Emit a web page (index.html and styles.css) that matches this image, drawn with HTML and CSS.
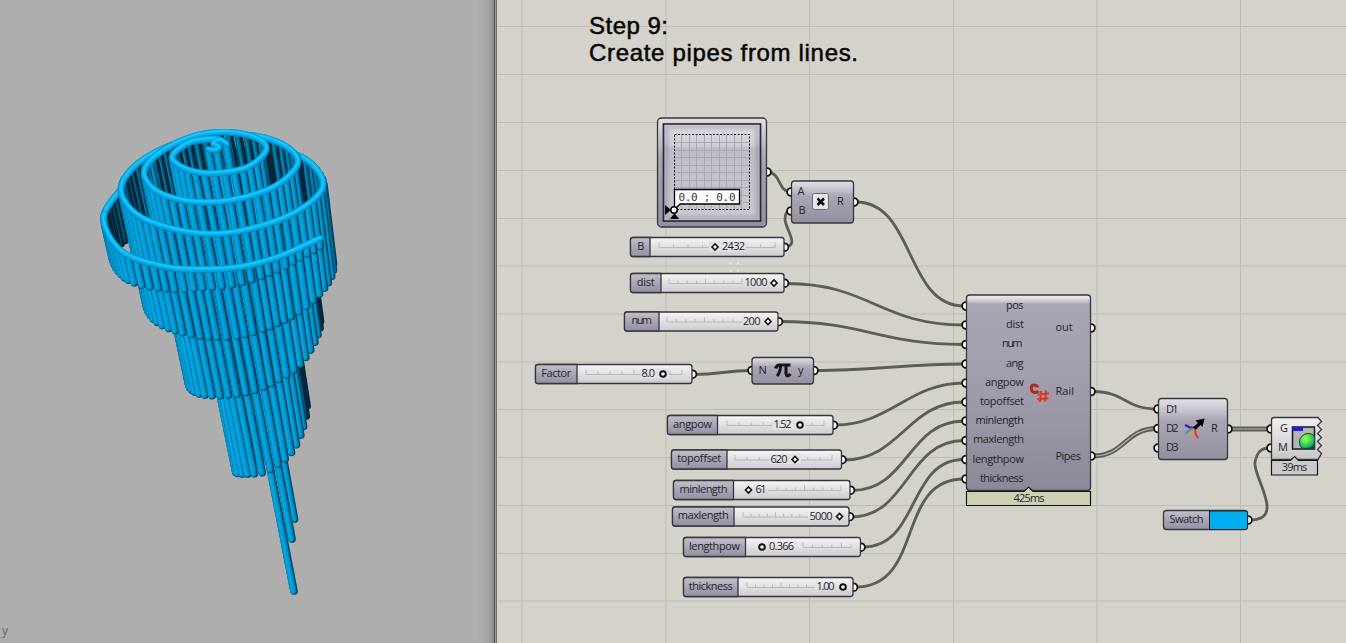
FILE: index.html
```html
<!DOCTYPE html>
<html lang="en">
<head>
<meta charset="utf-8">
<title>Step 9: Create pipes from lines</title>
<link rel="stylesheet" href="styles.css">
</head>
<body>
<main class="workspace">
  <section class="viewport">
    <svg class="model" id="model" viewBox="0 0 494 643"></svg>
    <span class="axis">y</span>
  </section>
  <div class="splitter"></div>
  <section class="canvas">
    <svg class="graph" viewBox="497 0 849 643">
      <defs>
        <linearGradient id="shell" x1="0" y1="0" x2="0" y2="1">
          <stop offset="0" stop-color="#e2e1e6"/><stop offset=".25" stop-color="#bdbac6"/><stop offset=".35" stop-color="#aaa6b6"/><stop offset="1" stop-color="#938f9f"/>
        </linearGradient>
        <linearGradient id="tall" x1="0" y1="0" x2="0" y2="1">
          <stop offset="0" stop-color="#f2f2f4"/><stop offset=".035" stop-color="#c6c4cd"/><stop offset=".045" stop-color="#aaa7b4"/><stop offset=".5" stop-color="#9f9bab"/><stop offset="1" stop-color="#8c8897"/>
        </linearGradient>
        <linearGradient id="tag" x1="0" y1="0" x2="0" y2="1">
          <stop offset="0" stop-color="#c2c0cb"/><stop offset=".45" stop-color="#aaa7b7"/><stop offset="1" stop-color="#9490a2"/>
        </linearGradient>
        <linearGradient id="bar" x1="0" y1="0" x2="0" y2="1">
          <stop offset="0" stop-color="#f5f5f6"/><stop offset=".5" stop-color="#e0dfe2"/><stop offset="1" stop-color="#cccbd0"/>
        </linearGradient>
        <linearGradient id="pad" x1="0" y1="0" x2="0" y2="1">
          <stop offset="0" stop-color="#dfdee2"/><stop offset=".23" stop-color="#cfcdd5"/><stop offset=".24" stop-color="#c0bdc9"/><stop offset="1" stop-color="#cac8d0"/>
        </linearGradient>
        <linearGradient id="light" x1="0" y1="0" x2="0" y2="1">
          <stop offset="0" stop-color="#f1f1f1"/><stop offset="1" stop-color="#c6c6c8"/>
        </linearGradient>
        <radialGradient id="ball" cx=".4" cy=".35" r=".7">
          <stop offset="0" stop-color="#a6ff70"/><stop offset=".5" stop-color="#3ee035"/><stop offset=".8" stop-color="#2aa88a"/><stop offset="1" stop-color="#144c40"/>
        </radialGradient>
        <filter id="soft" x="-10%" y="-10%" width="120%" height="120%"><feGaussianBlur stdDeviation="2"/></filter>
      </defs>

      <g class="grid">
        <path d="M497 26.5H1346M497 74.5H1346M497 122.5H1346M497 170.5H1346M497 218.5H1346M497 266H1346M497 314H1346M497 362H1346M497 409.5H1346M497 457.5H1346M497 505.5H1346M497 553.5H1346M497 601H1346"/>
        <path d="M522 0V643M666 0V643M809.5 0V643M953.5 0V643M1097 0V643M1240.5 0V643"/>
      </g>

      <g class="title">
        <text x="589" y="34" textLength="79">Step 9:</text>
        <text x="589" y="61" textLength="269">Create pipes from lines.</text>
      </g>

      <g class="wires">
        <path d="M768 172C781 173 778 191 790 192"/>
        <path d="M784 247C800 246 787 232 785 220C785 213 787 211 790 211"/>
        <path d="M856 202C915 202 905 306 964 306"/>
        <path d="M786 283.500C870 283.500 880 325 964 325"/>
        <path d="M780 321.500C865 321.500 880 344.500 964 344.500"/>
        <path d="M694 374.500C720 374.500 725 370.500 751 370.500"/>
        <path d="M816 370.500C870 370.500 910 364 964 364"/>
        <path d="M835 425C890 425 909 383 964 383"/>
        <path d="M844 460C900 460 908 402 964 402"/>
        <path d="M852 490.500C908 490.500 908 421 964 421"/>
        <path d="M851 517C908 517 907 440.500 964 440.500"/>
        <path d="M863 547C920 547 907 459.500 964 459.500"/>
        <path d="M855 587C925 587 895 479 964 479"/>
        <path d="M1093 391.500C1125 391.500 1125 409 1157 409"/>
        <path class="double" d="M1093 456C1125 456 1125 428.500 1157 428.500"/>
        <path class="core" d="M1093 456C1125 456 1125 428.500 1157 428.500"/>
        <path class="double" d="M1229 429H1270"/><path class="core" d="M1229 429H1270"/>
        <path d="M1250 520C1287 520 1252 476 1255 462C1257 453 1260 448 1270 448"/>
      </g>

      <g class="ports" id="ports"></g>
      <g id="sliders"></g>

      <g class="md-slider">
        <rect class="node" x="657.500" y="118" width="109" height="109" rx="4" fill="url(#shell)"/>
        <rect class="frame" x="663.500" y="124" width="97" height="97" fill="url(#pad)"/>
        <rect class="pad-shade" x="666" y="126.500" width="92" height="92"/>
        <path class="pad-grid" d="M681.500 135V209M689.500 135V209M696.500 135V209M704.500 135V209M711.500 135V209M719.500 135V209M726.500 135V209M734.500 135V209M741.500 135V209M674 142.500H749M674 150.500H749M674 157.500H749M674 165.500H749M674 172.500H749M674 180.500H749M674 187.500H749M674 195.500H749M674 202.500H749"/>
        <rect class="dotted" x="674.500" y="134.500" width="75" height="75"/>
        <path class="readout" d="M674.500 207V189.500H739.500V204H680L676 208"/>
        <text class="mono" x="678.500" y="201" textLength="57">0.0 ; 0.0</text>
        <path d="M665 205L671 210L665 215ZM670 219L674.500 213L679 219Z"/>
        <circle class="knob" cx="674" cy="210" r="3.200"/>
      </g>

      <g>
        <rect class="node" x="791.500" y="181" width="62" height="42" rx="3" fill="url(#shell)"/>
        <text x="797.500" y="195">A</text><text x="798.500" y="214">B</text><text x="837" y="205">R</text>
        <rect class="key" x="812.500" y="193.500" width="16" height="16" rx="2"/>
        <path class="cross" d="M817.500 198.500L824 205M824 198.500L817.500 205"/>
      </g>
      <g>
        <rect class="node" x="752" y="357.500" width="61.500" height="26.500" rx="3" fill="url(#shell)"/>
        <text x="758.500" y="373.500">N</text><text x="798" y="373.500">y</text>
        <path class="pi" d="M775.500 368.500C777 364.500 778.500 365 780 365H790.500M780.500 365.500C780.500 370 780 373 777 376M786 365.500V373C786 376 788 377 790.500 374"/>
      </g>

      <g class="script">
        <rect class="node" x="966.500" y="295" width="124" height="195.500" rx="3" fill="url(#tall)"/>
        <text x="1006" y="309" textLength="17.500">pos</text><text x="1006" y="328" textLength="18">dist</text><text x="1002" y="347" textLength="20.500">num</text><text x="1006" y="366.500" textLength="17.500">ang</text>
        <text x="985" y="385.500" textLength="39">angpow</text><text x="980" y="405" textLength="44">topoffset</text><text x="975.500" y="424" textLength="48.500">minlength</text><text x="973" y="443" textLength="51">maxlength</text>
        <text x="972.500" y="462.500" textLength="51.500">lengthpow</text><text x="980" y="481.500" textLength="43.500">thickness</text>
        <text x="1055.500" y="331">out</text><text x="1055.500" y="395">Rail</text><text x="1055.500" y="459.500" textLength="25.500">Pipes</text>
        <path class="csharp" d="M1038 387.300C1035.500 383.500 1031 384.500 1031.300 388.500C1031.500 393 1036 393.500 1038.300 391"/>
        <path class="hash" d="M1041 391L1040 402M1046 390.500L1045 401.500M1037.500 394.500L1049 393.500M1037 399.200L1048.500 398.200"/>
        <path class="timer" d="M966.500 491.500H1024L1028.500 487L1033 491.500H1090.500V505.500H966.500Z"/>
        <text class="mid" x="1029" y="501.500" textLength="31">425ms</text>
      </g>

      <g>
        <rect class="node" x="1158.500" y="398.500" width="69" height="61" rx="3" fill="url(#shell)"/>
        <text x="1166" y="412.500" textLength="12.500">D1</text><text x="1166" y="431.500" textLength="12.500">D2</text><text x="1166" y="450.500" textLength="12.500">D3</text><text x="1211" y="431.500">R</text>
        <path class="ray blue" d="M1185 425L1190 427.500H1195"/><path class="ray green" d="M1186 434C1188 430 1190 429 1194 428.500"/>
        <path class="ray orange" d="M1190 435L1194.500 429"/><path class="ray red" d="M1195 429C1195 434 1196 436 1198.500 438"/>
        <path d="M1193 427.500L1198 423L1195.500 420.500L1204.500 418.500L1202.500 427L1200.500 425L1196 429.500Z"/>
      </g>

      <g>
        <path class="node" fill="url(#light)" d="M1274 417.500H1318L1321.500 421.500L1317.500 425.500L1321.500 429.500L1317.500 433.500L1321.500 437.500L1317.500 441.500L1321.500 445.500L1317.500 449.500L1321.500 453.500L1318 459.500H1271.500V420Q1271.500 417.500 1274 417.500Z"/>
        <text x="1280" y="431.500">G</text><text x="1278" y="450.500">M</text>
        <rect class="picture" x="1292.500" y="427" width="22" height="22"/>
        <path fill="#2b17e8" d="M1292.500 427H1303V431H1292.500Z"/>
        <path fill="url(#ball)" stroke="#124b30" d="M1314.500 436A8 8 0 1 0 1302 448.500H1314.500Z"/>
        <path class="timer gray" d="M1271.500 460.500H1290.500L1294.500 456.500L1298.500 460.500H1317.500V475H1271.500Z"/>
        <text class="mid" x="1294.500" y="471" textLength="25.500">39ms</text>
      </g>

      <g>
        <rect class="node" x="1163.500" y="510.500" width="84" height="19" rx="3" fill="url(#tag)"/>
        <path class="swatch" d="M1209.500 511H1245Q1247.500 511 1247.500 513.500V527Q1247.500 529.500 1245 529.500H1209.500Z"/>
        <text x="1169.500" y="523" textLength="34">Swatch</text>
      </g>
      <path class="specks" d="M730 263.500h1.500M737 263.500h1.500M730 270.500h1.500M737 270.500h1.500"/>
    </svg>
  </section>
</main>
<script src="main.js"></script>
</body>
</html>
```
FILE: styles.css
```css
body { margin: 0; overflow: hidden; font-family: "Open Sans", "Noto Sans", sans-serif; }
.workspace { display: flex; width: 1346px; height: 643px; }
.viewport { position: relative; width: 494px; background: linear-gradient(90deg, #aeaeae 0, #aeaeae 478px, #a3a0a2 489px, #8d898c 494px); }
.model { display: block; width: 494px; height: 643px; }
.axis { position: absolute; left: 2px; bottom: 4px; color: #646464; font: 12px/16px "Open Sans", sans-serif; }
.splitter { width: 3px; background: linear-gradient(90deg, #505252 0 1px, #9b9b99 1px 2px, #6d6d6b 2px 3px); }
.canvas { width: 849px; background: #d5d2cb; }
.graph { display: block; width: 849px; height: 643px; }
.graph text { font-size: 11px; fill: #252429; }
.grid path { fill: none; stroke: #bfbcb5; stroke-width: 1; }
.graph .title text { font: 24px "Liberation Sans", Arial, sans-serif; fill: #050505; stroke: #050505; stroke-width: .5; }
.wires path { fill: none; stroke: #5e5c57; stroke-width: 2.8; }
.wires .double { stroke-width: 4.800; }
.wires .core { stroke: #b5b2ab; stroke-width: 1.2; }
.ports circle { fill: #fff; stroke: #111; stroke-width: 1.8; }
.node { stroke: #37363c; stroke-width: 1.3; }
.frame { stroke: #18171b; stroke-width: 1.6; }
.pad-shade { fill: none; stroke: #77738a; stroke-opacity: .45; stroke-width: 4; filter: url(#soft); }
.pad-grid { fill: none; stroke: #aaa7b3; stroke-width: 1; }
.dotted { fill: none; stroke: #111; stroke-dasharray: 2 1.5; }
.readout { fill: #fff; stroke: #000; stroke-width: 1.3; }
.graph .mono { font: 11px "DejaVu Sans Mono", monospace; fill: #333; }
.knob { fill: #fff; stroke: #000; stroke-width: 1.5; }
.key { fill: #e7e7e9; stroke: #6c6975; }
.cross { stroke: #080808; stroke-width: 2.5; }
.pi { fill: none; stroke: #151416; stroke-width: 3; }
.graph .mid { text-anchor: middle; }
.csharp { fill: none; stroke: #b82416; stroke-width: 3; }
.hash { fill: none; stroke: #d93a26; stroke-width: 2.1; }
.timer { fill: #ccd1b3; stroke: #151515; stroke-width: 1.2; }
.timer.gray { fill: #cbcacd; }
.ray { fill: none; stroke-width: 2; }
.blue { stroke: #3417c2; }
.green { stroke: #399e90; }
.orange { stroke: #dc9a35; }
.red { stroke: #e63a26; }
.picture { fill: #b5b3b7; stroke: #17161b; stroke-width: 1.5; }
.swatch { fill: #00aff0; stroke: #222; }
.specks { stroke: #f4f3ef; stroke-width: 1.5; }
.track { fill: none; stroke: #b4b2b7; stroke-width: .9; }
.handle { fill: #fff; stroke: #111; stroke-width: 1.6; }
.handle.round { stroke-width: 2; }
.pipe { stroke-linecap: round; fill: none; }
.rail { stroke-linejoin: round; fill: none; }
.rail.tip { stroke-linecap: round; }
```
FILE: main.js
```js
const NS = "http://www.w3.org/2000/svg";
function add(parent, tag, attrs, text) {
  const el = document.createElementNS(NS, tag);
  for (const k in attrs) el.setAttribute(k, attrs[k]);
  if (text) el.textContent = text;
  parent.appendChild(el);
  return el;
}

/* Number sliders: label, left, top, right, divider, label width,
   value, value left, value width, handle x, handle kind, track start, track end */
const sliders = [
  ["B", 630.5, 237.5, 784, 650, 6, "2432", 722, 23, 715, "d", 659, 775],
  ["dist", 630.5, 273.5, 784, 661, 18, "1000", 744.5, 23, 774, "d", 669, 742],
  ["num", 624.5, 312, 778, 659, 20.5, "200", 743, 17.5, 768, "d", 667, 742],
  ["Factor", 535.5, 364.500, 692, 577, 30, "8.0", 641.5, 13.5, 663, "c", 586, 682],
  ["angpow", 667.5, 415.500, 833, 717.5, 39, "1.52", 773.5, 18, 800, "c", 727, 824],
  ["topoffset", 671.5, 450, 841.5, 727, 44, "620", 770.5, 17, 795, "d", 735, 832],
  ["minlength", 673.5, 480.500, 850, 733.5, 48, "61", 755.5, 11, 748.5, "d", 768, 841],
  ["maxlength", 672.5, 507, 849, 734, 51, "5000", 809.5, 23, 839.5, "d", 743, 808],
  ["lengthpow", 683.5, 537.5, 860.5, 745.5, 51, "0.366", 769, 25, 762, "c", 803, 851],
  ["thickness", 683.5, 577.5, 853, 738, 44, "1.00", 816.5, 18, 843, "c", 747, 815]
];
const group = document.getElementById("sliders");
for (const [label, x, y, r, d, lw, value, vx, vw, hx, kind, t0, t1] of sliders) {
  const g = add(group, "g", {});
  add(g, "rect", { class: "node", x, y, width: r - x, height: 19, rx: 2.5, fill: "url(#bar)" });
  add(g, "path", { class: "node", fill: "url(#tag)", d: `M${d} ${y}H${x + 2.5}Q${x} ${y} ${x} ${y + 2.5}V${y + 16.5}Q${x} ${y + 19} ${x + 2.5} ${y + 19}H${d}Z` });
  const count = t1 - t0 < 60 ? 5 : 8, base = y + 10;
  let path = `M${t0} ${base}H${t1}`;
  for (let i = 0; i <= count; i++) {
    const tx = t0 + (t1 - t0) * i / count;
    const clash = Math.abs(tx - hx) < 7 || (tx > vx - 2 && tx < vx + vw + 2);
    if (!clash) path += `M${tx} ${base}v${i % 4 ? -3 : -5}`;
  }
  add(g, "path", { class: "track", d: path });
  if (t0 < vx && t1 > vx) {
    const a = Math.min(vx, hx - 5) - 1, b = Math.max(vx + vw, hx + 5) + 1;
    add(g, "rect", { x: a, y: y + 4, width: b - a, height: 10, fill: "#e2e1e4" });
  }
  add(g, "text", { x: (x + d) / 2 - lw / 2, y: y + 12, textLength: lw }, label);
  add(g, "text", { x: vx, y: y + 12.5, textLength: vw }, value);
  if (kind === "d") add(g, "path", { class: "handle", d: `M${hx - 3} ${y + 9.5}l3 -3l3 3l-3 3Z` });
  else add(g, "circle", { class: "handle round", cx: hx, cy: y + 9.5, r: 2.8 });
}

/* Wire sockets, half covered by the node they belong to */
const ports = document.getElementById("ports");
[[767, 172], [791, 192], [791, 211], [854, 202], [752, 370.5], [814, 370.5],
 [1091, 328], [1091, 391.5], [1091, 456], [1158, 409], [1158, 428.5], [1158, 448],
 [1228, 429], [1271, 429], [1271, 448], [1248, 520],
 ...[306, 325, 344.5, 364, 383, 402, 421, 440.5, 459.5, 479].map(y => [966, y]),
 ...sliders.map(s => [s[3] + .5, s[2] + 9.7])
].forEach(([cx, cy]) => add(ports, "circle", { cx, cy, r: 3.9 }));

/* Spiral rail: x, y, pipe length, depth centre */
const rail = [
  [208,149,315,148],[215,150,315,148],[219,147,315,148],[213,143,315,148],[220,140,315,149],[227,144,312,149],
  [217,139,318,150],[190,142,325,151],[172,157,318,153],[187,169,308,153],[213,173,300,153],[247,167,284,153],[266,150,262,154],
  [257,138,250,156],[230,132,240,157],[197,135,230,158],[163,150,222,160],[144,171,215,162],[157,191,206,163],[190,201,197,164],
  [230,200,190,165],[273,187,180,165],[297,165,166,165],[290,149,158,166],[263,137,150,167],[228,135,142,169],[180,142,135,173],
  [142,160,127,177],[122,183,120,181],[126,203,116,182],[147,220,112,183],[190,232,108,183],[233,232,104,183],[283,218,98,182],
  [316,197,90,182],[322,178,84,182],[300,156,77,186],[250,145,70,192],[190,153,62,200],[140,175,54,206],[112,200,46,212],
  [104,223,40,217],[123,252,32,218],[163,266,26,219],[197,269,22,219],[237,267,19,218],[277,257,15,217],[320,238,11,216]
];
const spline = (a, b, c, d, t) => .5 * (2 * b + (c - a) * t + (2 * a - 5 * b + 4 * c - d) * t * t + (3 * b - a - 3 * c + d) * t * t * t);
const samples = [];
for (let i = 0; i < rail.length - 1; i++) {
  const p = [rail[Math.max(i - 1, 0)], rail[i], rail[i + 1], rail[Math.min(i + 2, rail.length - 1)]];
  for (let s = 0; s < 20; s++) samples.push([0, 1, 2, 3].map(k => spline(p[0][k], p[1][k], p[2][k], p[3][k], s / 20)));
}
samples.push(rail[rail.length - 1]);

/* Split the spiral into far and near half turns */
const curl = 100;
const side = i => i < curl ? "core" : samples[i][1] > samples[i][3] ? "near" : "far";
const halves = [];
let travelled = 99;
samples.forEach((s, i) => {
  if (!halves.length || side(i) !== side(i - 1)) halves.push({ side: side(i), start: i, pipes: [] });
  const half = halves[halves.length - 1];
  half.end = i;
  if (i) travelled += Math.hypot(s[0] - samples[i - 1][0], 2.1 * (s[1] - samples[i - 1][1]));
  if (travelled >= 8.8) {
    travelled = 0;
    half.pipes.push(s);
  }
});
const order = [
  ...halves.filter(h => h.side === "far").reverse(),
  ...halves.filter(h => h.side === "core"),
  ...halves.filter(h => h.side === "near")
];

const shades = {
  far: [["#00283a", 7.6, .6], ["#005b80", 4.4, -1], ["#0082b0", 2, -1.4]],
  near: [["#004563", 7.6, .5], ["#0078a6", 6.4, -.2], ["#0094cc", 5, -.7], ["#04a4e0", 2.4, -1.1]]
};
shades.core = shades.near;
const model = document.getElementById("model");
function pipe(tones, x, y, endX, endY) {
  for (const [stroke, width, dx] of tones) {
    add(model, "path", { class: "pipe", stroke, "stroke-width": width, d: `M${x + dx} ${y}L${endX + dx} ${endY}` });
  }
}

for (const half of order) {
  half.pipes.sort((a, b) => (a[1] - a[3]) - (b[1] - b[3]));
  if (half.side === "core") {
    /* The longest pipes hang from the curl in the middle */
    pipe(shades.near, 226, 145, 294, 519);
    pipe(shades.near, 219, 148, 291.5, 539);
    pipe(shades.near, 208, 149, 293.5, 591);
  }
  for (const [x, y, len] of half.pipes) {
    const slope = .19 + (210 - x) * (x > 210 ? .0006 : .0003);
    const drop = Math.max(len - 3, 6);
    pipe(shades[half.side], x + .4, y + 2.5, x + drop * slope, y + drop);
  }
  const run = samples.slice(Math.max(half.start - 3, 0), half.end + 4);
  const tip = half.end === samples.length - 1 || half.start === 0;
  for (const [stroke, width, dy] of [["#0083b5", 6.8, .5], ["#00a4df", 5.6, 0], ["#06b5f0", 3.8, -.4], ["#20c6fa", 1.6, -.8]]) {
    const d = "M" + run.map(p => `${p[0].toFixed(1)} ${(p[1] + dy).toFixed(1)}`).join("L");
    add(model, "path", { class: tip ? "rail tip" : "rail", stroke, "stroke-width": half.side === "core" ? width * .85 : width, d });
  }
}
```
